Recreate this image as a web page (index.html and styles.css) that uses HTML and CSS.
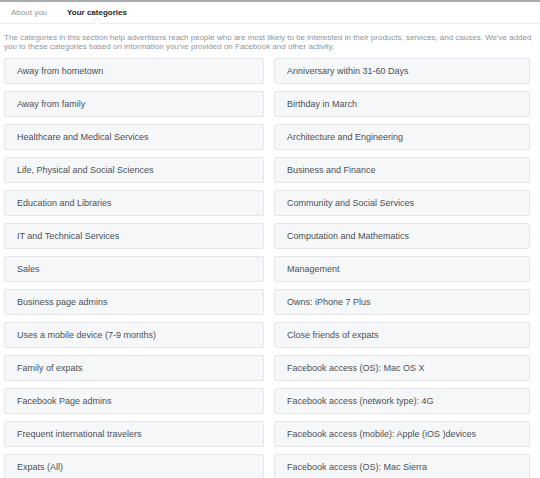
FILE: index.html
```html
<!DOCTYPE html>
<html lang="en">
<head>
    <meta charset="UTF-8">
    <title>Your categories</title>
    <link rel="stylesheet" href="styles.css">
</head>
<body>
    <div class="topbar"></div>
    <div class="tabs">
        <span class="tab">About you</span>
        <span class="tab active">Your categories</span>
    </div>
    <p class="intro">The categories in this section help advertisers reach people who are most likely to be interested in their products, services, and causes. We've added you to these categories based on information you've provided on Facebook and other activity.</p>
    <div class="grid">
        <div class="cat">Away from hometown</div>
        <div class="cat">Anniversary within 31-60 Days</div>
        <div class="cat">Away from family</div>
        <div class="cat">Birthday in March</div>
        <div class="cat">Healthcare and Medical Services</div>
        <div class="cat">Architecture and Engineering</div>
        <div class="cat">Life, Physical and Social Sciences</div>
        <div class="cat">Business and Finance</div>
        <div class="cat">Education and Libraries</div>
        <div class="cat">Community and Social Services</div>
        <div class="cat">IT and Technical Services</div>
        <div class="cat">Computation and Mathematics</div>
        <div class="cat">Sales</div>
        <div class="cat">Management</div>
        <div class="cat">Business page admins</div>
        <div class="cat">Owns: iPhone 7 Plus</div>
        <div class="cat">Uses a mobile device (7-9 months)</div>
        <div class="cat">Close friends of expats</div>
        <div class="cat">Family of expats</div>
        <div class="cat">Facebook access (OS): Mac OS X</div>
        <div class="cat">Facebook Page admins</div>
        <div class="cat">Facebook access (network type): 4G</div>
        <div class="cat">Frequent international travelers</div>
        <div class="cat">Facebook access (mobile): Apple (iOS )devices</div>
        <div class="cat">Expats (All)</div>
        <div class="cat">Facebook access (OS): Mac Sierra</div>
    </div>
</body>
</html>
```

FILE: styles.css
```css
* {
    box-sizing: border-box;
    margin: 0;
    padding: 0;
}

body {
    font-family: 'Liberation Sans', Arial, sans-serif;
    background: #fff;
    color: #4b4f56;
    width: 540px;
    height: 478px;
    overflow: hidden;
}

.topbar {
    height: 2px;
    background: #a7adb0;
}

/* Tabs */
.tabs {
    position: relative;
    display: flex;
    gap: 20px;
    height: 22px;
    align-items: center;
    padding-left: 11px;
    border-bottom: 1px solid #e9ebee;
    font-size: 8px;
}

.tab {
    color: #90949c;
}

.tab.active {
    position: relative;
    color: #1d2129;
    font-weight: bold;
}

.tab.active::after {
    content: '';
    position: absolute;
    left: 27px;
    bottom: -7px;
    width: 5px;
    height: 5px;
    background: #fff;
    border-left: 1px solid #e9ebee;
    border-top: 1px solid #e9ebee;
    transform: rotate(45deg);
}

.intro {
    padding: 9px 4px 0 4px;
    font-size: 8px;
    line-height: 9px;
    color: #90949c;
}

/* Category boxes */
.grid {
    display: grid;
    grid-template-columns: 260px 256px;
    column-gap: 10px;
    row-gap: 7px;
    padding: 7px 0 0 4px;
}

.cat {
    height: 26px;
    padding-left: 12px;
    display: flex;
    align-items: center;
    background: #f6f7f9;
    border: 1px solid #e4e6eb;
    border-radius: 2px;
    font-size: 9px;
    color: #4b4f56;
}
```
